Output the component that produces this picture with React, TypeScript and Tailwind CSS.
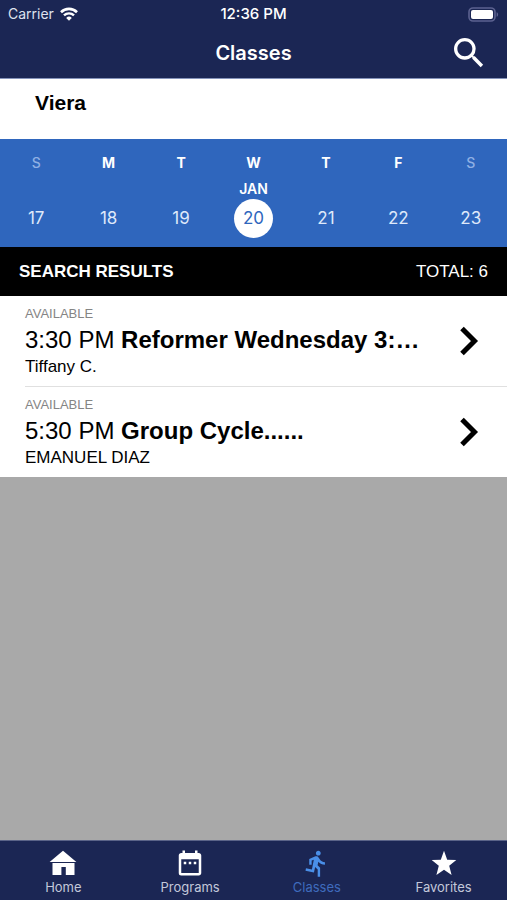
import React, { useState } from "react";
import clsx from "clsx";
import { MdDateRange, MdDirectionsRun, MdSearch } from "react-icons/md";

interface Day {
  letter: string;
  date: number;
  weekend?: boolean;
}

interface ClassItem {
  id: string;
  status: string;
  time: string;
  name: string;
  instructor: string;
}

const DAYS: Day[] = [
  { letter: "S", date: 17, weekend: true },
  { letter: "M", date: 18 },
  { letter: "T", date: 19 },
  { letter: "W", date: 20 },
  { letter: "T", date: 21 },
  { letter: "F", date: 22 },
  { letter: "S", date: 23, weekend: true },
];

const CLASSES: ClassItem[] = [
  {
    id: "reformer",
    status: "AVAILABLE",
    time: "3:30 PM",
    name: "Reformer Wednesday 3:…",
    instructor: "Tiffany C.",
  },
  {
    id: "cycle",
    status: "AVAILABLE",
    time: "5:30 PM",
    name: "Group Cycle......",
    instructor: "EMANUEL DIAZ",
  },
];

function WifiIcon() {
  return (
    <svg width="18" height="14" viewBox="0 0 18 14" fill="none" aria-hidden="true">
      <path d="M1 5.2a11.4 11.4 0 0 1 16 0" stroke="white" strokeWidth="2.6" />
      <path d="M4 8.4a7.1 7.1 0 0 1 10 0" stroke="white" strokeWidth="2.4" />
      <path d="M9 13.8 6.2 10.9a4 4 0 0 1 5.6 0Z" fill="white" />
    </svg>
  );
}

function BatteryIcon() {
  return (
    <svg width="31" height="15" viewBox="0 0 31 15" aria-hidden="true">
      <rect x="1" y="1" width="26" height="13" rx="4" fill="none" stroke="#5c6290" strokeWidth="1.6" />
      <rect x="3" y="3" width="22" height="9" rx="2" fill="white" />
      <path d="M28.6 5.2c2 .6 2 4 0 4.6Z" fill="#5c6290" />
    </svg>
  );
}

function HomeIcon() {
  return (
    <svg width="28" height="26" viewBox="0 0 28 26" fill="white" aria-hidden="true">
      <path d="M14 .8 27.4 12H.6Z" />
      <path d="M3.5 13h22v12h-8.7v-8h-4.4v8H3.5Z" />
    </svg>
  );
}

function StarIcon() {
  return (
    <svg width="26" height="26" viewBox="0 0 26 26" fill="white" aria-hidden="true">
      <path d="M13 .8 16.2 9.7 25.3 10 18.2 15.8 20.6 25 13 19.8 5.4 25 7.8 15.8.7 10 9.8 9.7Z" />
    </svg>
  );
}

function ChevronIcon() {
  return (
    <svg width="20" height="30" viewBox="0 0 20 30" fill="none" aria-hidden="true">
      <path d="M3 2.5 15.5 15 3 27.5" stroke="black" strokeWidth="5" />
    </svg>
  );
}

const TABS = [
  { label: "Home", icon: <HomeIcon /> },
  { label: "Programs", icon: <MdDateRange size={30} /> },
  { label: "Classes", icon: <MdDirectionsRun size={29} /> },
  { label: "Favorites", icon: <StarIcon /> },
];

function Header() {
  return (
    <header className="border-b border-[#8593ba] bg-[#1b2654] text-white">
      <div className="grid h-7 grid-cols-3 items-center px-2 text-sm">
        <span className="flex items-center gap-1.5 text-[#dfe2ee]">
          Carrier
          <WifiIcon />
        </span>
        <span className="text-center text-[15px] font-medium">12:36 PM</span>
        <span className="flex justify-end">
          <BatteryIcon />
        </span>
      </div>
      <div className="grid h-[50px] grid-cols-[1fr_auto_1fr] items-center px-4.5">
        <h1 className="col-start-2 text-xl/6 font-semibold">Classes</h1>
        <button type="button" aria-label="Search" className="justify-self-end">
          <MdSearch size={40} />
        </button>
      </div>
    </header>
  );
}

function WeekStrip() {
  const [selected, setSelected] = useState(20);

  return (
    <div className="grid h-27 grid-cols-7 bg-[#2f66bd] pt-3.5 text-white">
      {DAYS.map((day) => (
        <button
          type="button"
          key={day.date}
          onClick={() => setSelected(day.date)}
          className="flex flex-col items-center"
        >
          <span
            className={clsx(
              "h-5 text-sm",
              day.weekend ? "font-medium text-[#8fb0e4]" : "font-bold"
            )}
          >
            {day.letter}
          </span>
          <span className="mt-1.5 h-5 text-sm font-semibold">
            {day.date === selected && "JAN"}
          </span>
          <span
            className={clsx(
              "flex size-[39px] items-center justify-center rounded-full text-[17px]",
              day.date === selected
                ? "bg-white text-[#2f66bd]"
                : "text-[#dfe9fa]"
            )}
          >
            {day.date}
          </span>
        </button>
      ))}
    </div>
  );
}

function ClassRow({ item, last }: { item: ClassItem; last: boolean }) {
  return (
    <li className="pl-[25px]">
      <a
        href={`#${item.id}`}
        className={clsx(
          "flex items-center justify-between pr-7",
          !last && "border-b border-[#e0e0e0]"
        )}
      >
        <div className="min-w-0 py-2">
          <p className="text-[13px]/5 text-[#858585]">{item.status}</p>
          <p className="truncate text-2xl">
            {item.time} <b>{item.name}</b>
          </p>
          <p className="text-[17px]/[22px]">{item.instructor}</p>
        </div>
        <ChevronIcon />
      </a>
    </li>
  );
}

export default function App() {
  const [tab, setTab] = useState("Classes");

  return (
    <div className="flex min-h-screen flex-col bg-[#a9a9a9] font-['Inter',sans-serif]">
      <Header />
      <main className="flex-1 font-['Liberation_Sans',Arial,sans-serif] text-black">
        <h2 className="h-15 bg-white px-[35px] pt-2 text-[21px] font-bold">Viera</h2>
        <div className="font-['Inter',sans-serif]">
          <WeekStrip />
        </div>
        <div className="flex h-[49px] items-center justify-between bg-black px-[19px] text-[17px] text-white">
          <h3 className="font-bold">SEARCH RESULTS</h3>
          <span>TOTAL: 6</span>
        </div>
        <ul className="bg-white">
          {CLASSES.map((item, i) => (
            <ClassRow key={item.id} item={item} last={i === CLASSES.length - 1} />
          ))}
        </ul>
      </main>
      <nav className="grid h-15 grid-cols-4 border-t border-[#5a6388] bg-[#1b2654]">
        {TABS.map(({ label, icon }) => (
          <button
            type="button"
            key={label}
            onClick={() => setTab(label)}
            className={clsx(
              "flex flex-col items-center pt-1.5",
              tab === label ? "text-[#4a8fe8]" : "text-white"
            )}
          >
            <span className="flex h-8 items-center">{icon}</span>
            <span
              className={clsx(
                "text-[13px]/4",
                tab === label ? "text-[#3f6bbd]" : "text-[#c3c8da]"
              )}
            >
              {label}
            </span>
          </button>
        ))}
      </nav>
    </div>
  );
}
